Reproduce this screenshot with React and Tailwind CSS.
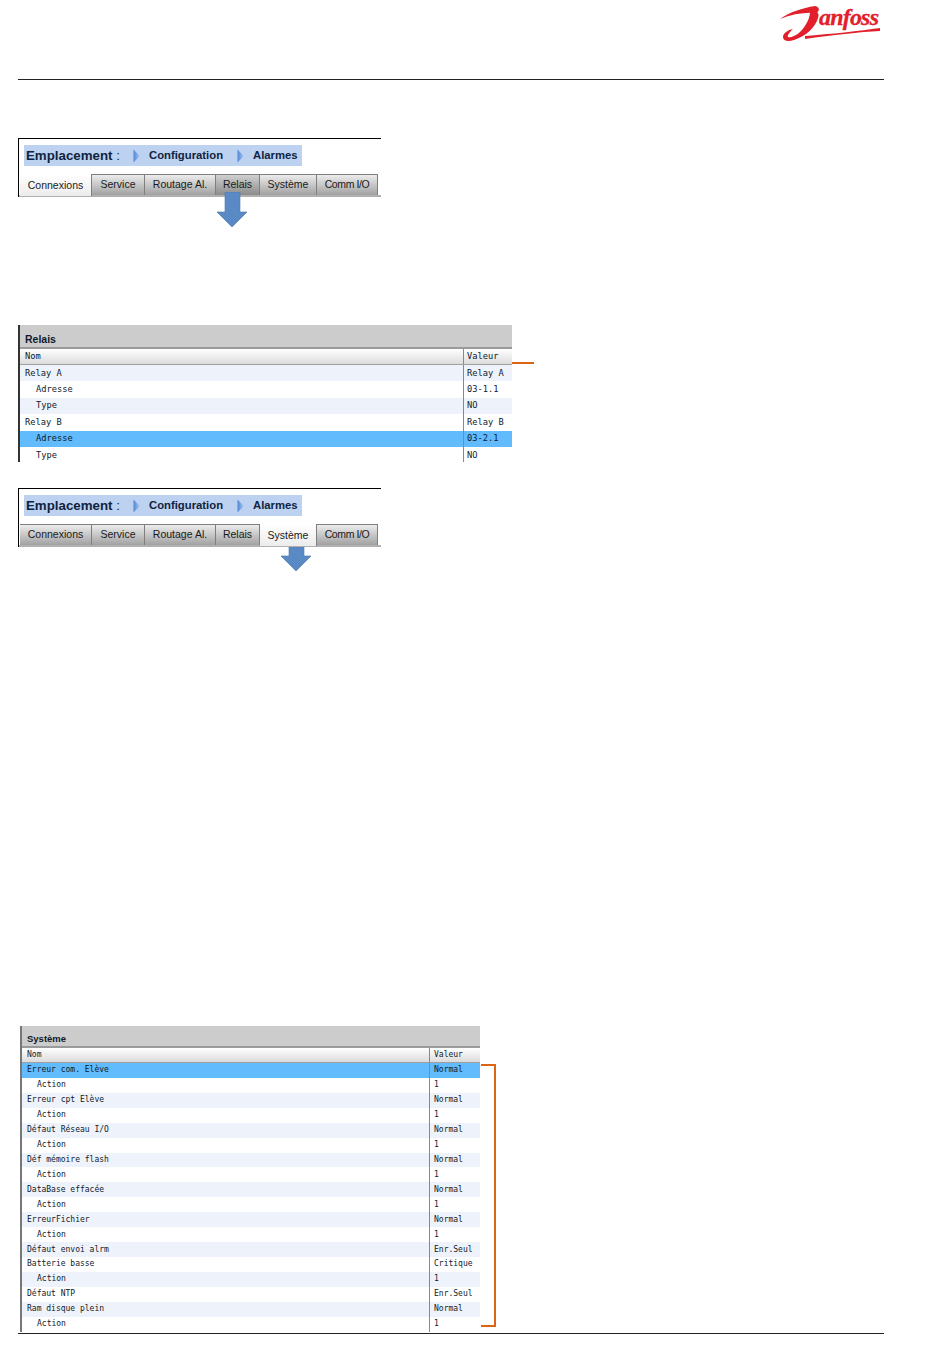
import React from 'react';

const tabs = ['Connexions', 'Service', 'Routage Al.', 'Relais', 'Système', 'Comm I/O'];
const tabWidths = ['w-[72px]', 'w-[53px]', 'w-[71px]', 'w-[44px]', 'w-[57px]', 'w-[61px]'];

const relayRows = [
  ['Relay A', 'Relay A', 0],
  ['Adresse', '03-1.1', 1],
  ['Type', 'NO', 1],
  ['Relay B', 'Relay B', 0],
  ['Adresse', '03-2.1', 1, true],
  ['Type', 'NO', 1],
];

const systemRows = [
  ['Erreur com. Elève', 'Normal', 0, true],
  ['Action', '1', 1],
  ['Erreur cpt Elève', 'Normal', 0],
  ['Action', '1', 1],
  ['Défaut Réseau I/O', 'Normal', 0],
  ['Action', '1', 1],
  ['Déf mémoire flash', 'Normal', 0],
  ['Action', '1', 1],
  ['DataBase effacée', 'Normal', 0],
  ['Action', '1', 1],
  ['ErreurFichier', 'Normal', 0],
  ['Action', '1', 1],
  ['Défaut envoi alrm', 'Enr.Seul', 0],
  ['Batterie basse', 'Critique', 0],
  ['Action', '1', 1],
  ['Défaut NTP', 'Enr.Seul', 0],
  ['Ram disque plein', 'Normal', 0],
  ['Action', '1', 1],
];

function Logo() {
  return (
    <svg width="106" height="45" viewBox="18 0 106 45" className="absolute left-[778px] top-0">
      <path d="M20 19 C30 12 42 8 55 6 C60 7 60 11 56 13 C45 12 32 14 20 19 Z" fill="#e2202c" />
      <path d="M50 12 C56 10 60 12 58 18 C55 28 46 36 34 40 C28 42 23 41 23 37 C23 33 28 30 33 29 C30 32 27 35 28 37 C30 38 36 36 40 32 C46 26 50 18 50 12 Z" fill="#e2202c" />
      <path d="M45 36 C70 34 100 31 120 28 L120 31 C100 32 72 35 45 39 Z" fill="#e2202c" />
      <text x="59" y="25" fontFamily="'Liberation Serif', serif" fontStyle="italic" fontWeight="700" fontSize="24" textLength="60" fill="#e2202c" stroke="#e2202c" strokeWidth="0.3">anfoss</text>
    </svg>
  );
}

function Chevron() {
  return (
    <svg width="7" height="14" viewBox="0 0 7 14">
      <defs>
        <linearGradient id="chev" x1="0" x2="1" y1="0" y2="0">
          <stop offset="0" stopColor="#4f86d8" />
          <stop offset="1" stopColor="#a9c8ef" />
        </linearGradient>
      </defs>
      <path d="M0.5 0.5 L6.8 7 L0.5 13.5 Z" fill="url(#chev)" />
    </svg>
  );
}

function Arrow({ className, shaft }) {
  const tip = shaft + 15;
  return (
    <svg width="30" height={tip + 1} viewBox={'0 0 30 ' + (tip + 1)} className={className}>
      <path d={'M8 0 H23 V' + shaft + ' H30 L15 ' + tip + ' L0 ' + shaft + ' H8 Z'} fill="#5a8ac6" stroke="#4a76ad" strokeWidth="0.6" />
    </svg>
  );
}

function NavPanel({ active, hover, arrow }) {
  return (
    <div className="relative ml-[18px] h-[59px] w-[363px] border-t border-l border-black font-['Liberation_Sans',sans-serif]">
      <div className="ml-[5px] mt-[6px] flex h-[21px] w-[278px] items-center bg-[#bcd2f0] pl-[2px] text-[#10233f]">
        <span className="w-[107px] whitespace-nowrap text-[13.3px] font-bold">
          Emplacement <span className="font-normal">:</span>
        </span>
        <Chevron />
        <span className="ml-[9px] w-[88px] text-[11.3px] font-bold">Configuration</span>
        <Chevron />
        <span className="ml-[9px] text-[11.3px] font-bold">Alarmes</span>
      </div>
      <div className="mt-[8px] flex h-[23px] items-start border-b-2 border-[#b0b0b0] pl-px">
        {tabs.map((tab, i) => (
          <div
            key={tab}
            className={
              tabWidths[i] +
              ' flex items-center justify-center whitespace-nowrap border-r border-[#7f7f7f] text-[10.5px] text-[#1a1a1a] ' +
              (i === 5 ? 'tracking-[-0.4px] ' : '') +
              (i === active
                ? 'h-[22px] bg-gradient-to-b from-white to-[#ececec] pt-[2px]'
                : i === hover
                  ? 'h-[21px] border-t bg-gradient-to-b from-[#d0d0d0] to-[#8c8c8c]'
                  : 'h-[21px] border-t bg-gradient-to-b from-[#ececec] to-[#a2a2a2]')
            }
          >
            {tab}
          </div>
        ))}
      </div>
      {arrow}
    </div>
  );
}

function DataTable({ title, rows, rowClass, textClass, nameWidth, className, bodyClass, headerClass, columnClass, indent, valuePad, children }) {
  return (
    <div className={'relative font-["DejaVu_Sans_Mono",monospace] text-[#0e1a2a] ' + className}>
      <div className={'border-l-2 ' + bodyClass}>
        <div className={"flex items-end border-b-2 border-[#9a9a9a] bg-[#cccccc] pl-[5px] font-['Liberation_Sans',sans-serif] font-bold leading-[12px] " + headerClass}>
          {title}
        </div>
        <div className={'flex items-center border-b border-[#a0a0a0] bg-gradient-to-b from-white to-[#dcdcdc] ' + columnClass + ' ' + textClass}>
          <div className={nameWidth + ' pl-[5px]'}>Nom</div>
          <div className={'flex h-full flex-1 items-center border-l border-[#888888] ' + valuePad}>Valeur</div>
        </div>
        {rows.map((row, i) => (
          <div
            key={i}
            className={
              'flex items-center ' + rowClass + ' ' + textClass + ' ' +
              (row[3] ? 'bg-[#62bbfc]' : i % 2 === 0 ? 'bg-[#eef2fa]' : 'bg-white')
            }
          >
            <div className={nameWidth + ' ' + (row[2] ? indent : 'pl-[5px]')}>{row[0]}</div>
            <div className={'flex h-full flex-1 items-center border-l border-[#888888] ' + valuePad}>{row[1]}</div>
          </div>
        ))}
      </div>
      {children}
    </div>
  );
}

export default function App() {
  return (
    <div className="relative h-[1369px] w-[950px] overflow-hidden bg-white">
      <Logo />
      <div className="ml-[18px] h-[80px] w-[866px] border-b border-[#222222]" />

      <div className="mt-[58px]">
        <NavPanel active={0} hover={3} arrow={<Arrow shaft={20} className="absolute left-[198px] top-[53px]" />} />
      </div>

      <DataTable
        title="Relais"
        rows={relayRows}
        rowClass="h-[16.4px]"
        textClass="text-[8.7px]"
        nameWidth="w-[443px]"
        indent="pl-[16px]"
        bodyClass="h-[137px] overflow-hidden border-[#333333]"
        headerClass="h-[24px] pb-[2px] text-[10.5px]"
        columnClass="h-[16px]"
        valuePad="pl-[3px]"
        className="ml-[18px] mt-[128px] w-[494px]"
      >
        <div className="absolute left-[494px] top-[37px] h-[2px] w-[22px] bg-[#dc6414]" />
      </DataTable>

      <div className="mt-[26px]">
        <NavPanel active={4} arrow={<Arrow shaft={9} className="absolute left-[262px] top-[58px]" />} />
      </div>

      <DataTable
        title="Système"
        rows={systemRows}
        rowClass="h-[14.93px]"
        textClass="text-[8px]"
        nameWidth="w-[407px]"
        indent="pl-[15px]"
        bodyClass="border-[#777777]"
        headerClass="h-[22px] pb-[1px] text-[9.5px]"
        columnClass="h-[15px]"
        valuePad="pl-[4px]"
        className="ml-[20px] mt-[479px] w-[460px]"
      >
        <div className="absolute left-[461px] top-[38px] h-[263px] w-[15px] border-y-2 border-r-2 border-[#dc6414]" />
      </DataTable>

      <div className="ml-[18px] mt-px h-px w-[866px] bg-[#222222]" />
    </div>
  );
}
